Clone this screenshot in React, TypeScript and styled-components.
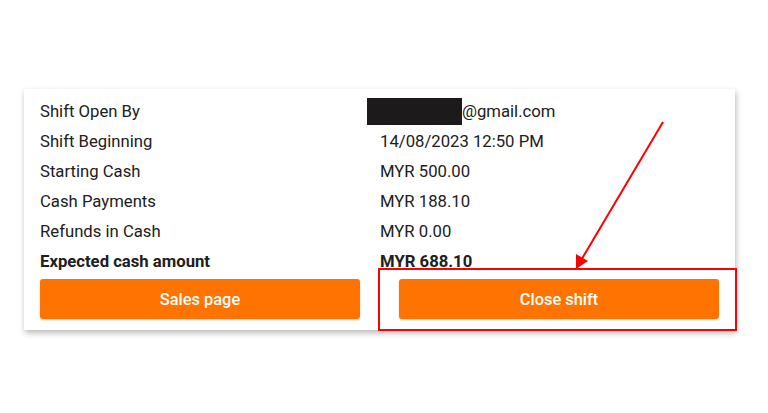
import React from "react";
import styled, { createGlobalStyle } from "styled-components";

const GlobalStyle = createGlobalStyle`
  html, body {
    margin: 0;
    padding: 0;
    background: #ffffff;
  }
  body {
    font-family: Roboto, "Liberation Sans", Arial, sans-serif;
  }
`;

const rows: { label: string; value: string; strong?: boolean; redacted?: boolean }[] = [
  { label: "Shift Open By", value: "@gmail.com", redacted: true },
  { label: "Shift Beginning", value: "14/08/2023 12:50 PM" },
  { label: "Starting Cash", value: "MYR 500.00" },
  { label: "Cash Payments", value: "MYR 188.10" },
  { label: "Refunds in Cash", value: "MYR 0.00" },
  { label: "Expected cash amount", value: "MYR 688.10", strong: true },
];

const App: React.FC = () => {
  return (
    <Page>
      <GlobalStyle />
      <Card>
        <Table>
          {rows.map((row) => (
            <React.Fragment key={row.label}>
              <Cell strong={row.strong}>{row.label}</Cell>
              <Cell strong={row.strong}>
                {row.redacted && <Redacted />}
                {row.value}
              </Cell>
            </React.Fragment>
          ))}
        </Table>
        <Actions>
          <ActionButton>Sales page</ActionButton>
          <ActionButton>Close shift</ActionButton>
        </Actions>
      </Card>
      <Highlight />
      <Arrow width="768" height="413" viewBox="0 0 768 413">
        <line x1="663" y1="122" x2="580" y2="262" stroke="#ff0000" strokeWidth="2" />
        <polygon points="576,269 576,254 588,261" fill="#ff0000" />
      </Arrow>
    </Page>
  );
};

export default App;

const Page = styled.div`
  position: relative;
  width: 768px;
  height: 413px;
  padding: 89px 33px 0 24px;
  box-sizing: border-box;
  overflow: hidden;
`;

const Card = styled.div`
  width: 711px;
  box-sizing: border-box;
  padding: 7px 16px 11px;
  background: #ffffff;
  box-shadow: 1px 3px 6px rgba(0, 0, 0, 0.28);
`;

const Table = styled.div`
  display: grid;
  grid-template-columns: 340px 1fr;
`;

const Cell = styled.div<{ strong?: boolean }>`
  display: flex;
  align-items: center;
  height: 30px;
  font-size: 16.7px;
  color: #202020;
  font-weight: ${({ strong }) => (strong ? 700 : 400)};
`;

const Redacted = styled.span`
  display: inline-block;
  width: 95px;
  height: 27px;
  margin-left: -13px;
  background: #1c1a1a;
`;

const Actions = styled.div`
  display: grid;
  grid-template-columns: 1fr 1fr;
  column-gap: 39px;
  margin-top: 3px;
`;

const ActionButton = styled.button`
  height: 40px;
  border: 0;
  border-radius: 3px;
  background: #ff7400;
  color: #ffffff;
  font-family: Roboto, "Liberation Sans", Arial, sans-serif;
  font-size: 16.4px;
  font-weight: 500;
  box-shadow: 0 1px 2px rgba(0, 0, 0, 0.2);
`;

const Highlight = styled.div`
  position: absolute;
  left: 378px;
  top: 268px;
  width: 359px;
  height: 63px;
  box-sizing: border-box;
  border: 2px solid #ff0000;
`;

const Arrow = styled.svg`
  position: absolute;
  left: 0;
  top: 0;
  pointer-events: none;
`;
